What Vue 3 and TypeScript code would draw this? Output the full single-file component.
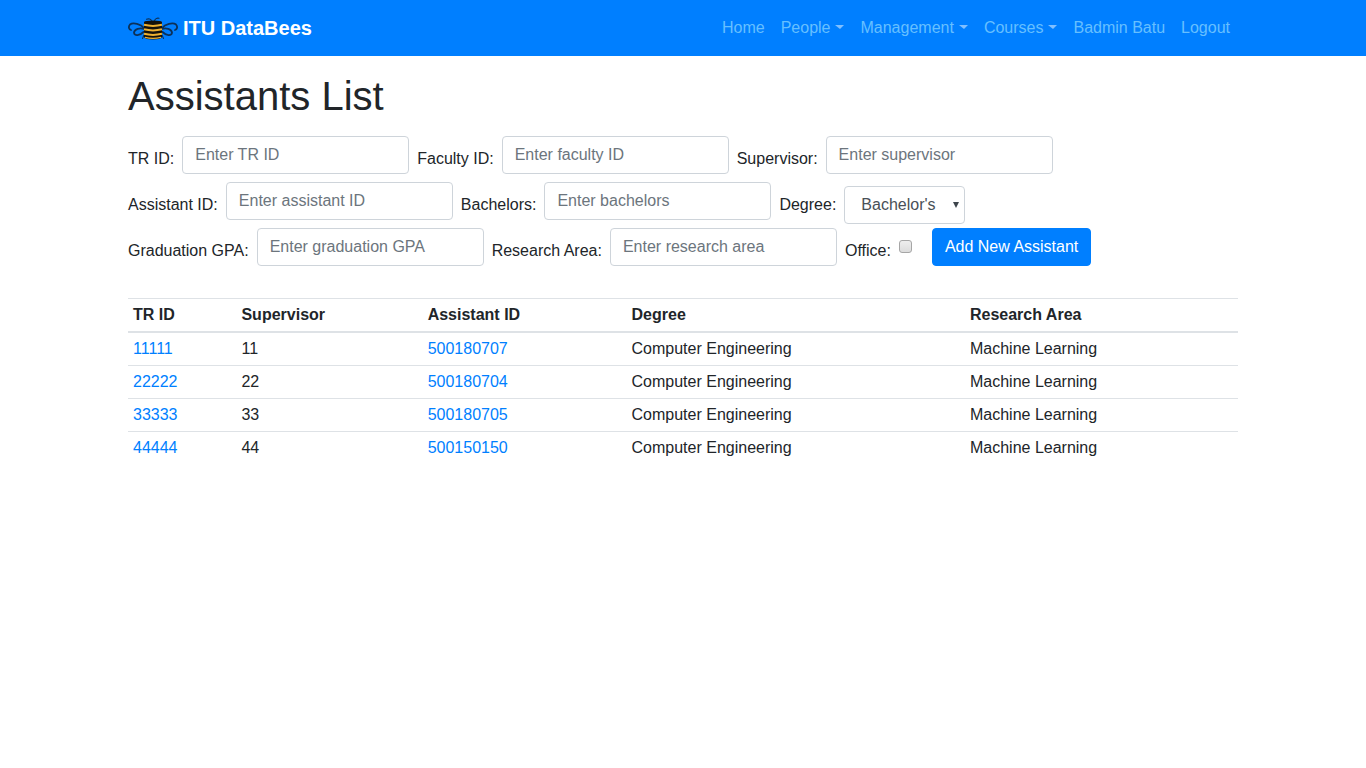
<script setup lang="ts">
import { reactive, ref } from 'vue'

interface NavItem { label: string; menu?: boolean }
interface TextField { id: string; label: string; hint: string }
interface Assistant { tr: string; supervisor: string; id: string; degree: string; area: string }

const nav: NavItem[] = [
  { label: 'Home' },
  { label: 'People', menu: true },
  { label: 'Management', menu: true },
  { label: 'Courses', menu: true },
  { label: 'Badmin Batu' },
  { label: 'Logout' },
]

const rows: TextField[][] = [
  [
    { id: 'tr', label: 'TR ID:', hint: 'Enter TR ID' },
    { id: 'faculty', label: 'Faculty ID:', hint: 'Enter faculty ID' },
    { id: 'supervisor', label: 'Supervisor:', hint: 'Enter supervisor' },
  ],
  [
    { id: 'assistant', label: 'Assistant ID:', hint: 'Enter assistant ID' },
    { id: 'bachelors', label: 'Bachelors:', hint: 'Enter bachelors' },
  ],
  [
    { id: 'gpa', label: 'Graduation GPA:', hint: 'Enter graduation GPA' },
    { id: 'area', label: 'Research Area:', hint: 'Enter research area' },
  ],
]

const values = reactive<Record<string, string>>({})
const degree = ref("Bachelor's")
const office = ref(false)

const headings = ['TR ID', 'Supervisor', 'Assistant ID', 'Degree', 'Research Area']
const field = 'Computer Engineering'
const area = 'Machine Learning'
const assistants: Assistant[] = [
  { tr: '11111', supervisor: '11', id: '500180707', degree: field, area },
  { tr: '22222', supervisor: '22', id: '500180704', degree: field, area },
  { tr: '33333', supervisor: '33', id: '500180705', degree: field, area },
  { tr: '44444', supervisor: '44', id: '500150150', degree: field, area },
]
</script>

<template>
  <header class="navbar">
    <div class="container bar">
      <a href="#" class="brand">
        <svg class="bee" viewBox="0 0 50 26" aria-hidden="true">
          <g fill="none" stroke="#0c3158" stroke-width="1.8" stroke-linecap="round">
            <path d="M16 13C13 9 5 7 2 9.500C0 12 1 14.500 3 15M16 14C12 12.500 6.500 14 6 17.500C6 21.500 12 20.500 15.500 17" />
            <path d="M34 13C37 9 45 7 48 9.500C50 12 49 14.500 47 15M34 14C38 12.500 43.500 14 44 17.500C44 21.500 38 20.500 34.500 17" />
            <path d="M23.500 6C23 3.800 20.500 3.500 18.500 4.200M26.500 6C27 3.800 29 2.800 31 3.300M16 20L14.500 23.500M34 20L35.500 23.500" stroke-width="1.1" />
          </g>
          <path d="M16 7Q17 5.500 25 5.500Q33 5.500 34 7V22Q33 24.500 25 24.500Q17 24.500 16 22Z" fill="#14120c" />
          <g fill="none" stroke="#edb132" stroke-width="2">
            <path d="M16 9.800Q25 12 34 9.800M16 14.300Q25 16.500 34 14.300M16 18.800Q25 21 34 18.800" />
            <path d="M17 22.400Q25 24.400 33 22.400" stroke-width="1.4" />
          </g>
        </svg>
        <span>ITU DataBees</span>
      </a>
      <nav class="links">
        <a v-for="item in nav" :key="item.label" href="#" :class="{ menu: item.menu }">{{ item.label }}</a>
      </nav>
    </div>
  </header>

  <main class="container">
    <h1>Assistants List</h1>

    <form @submit.prevent>
      <div v-for="(row, index) in rows" :key="index" class="row">
        <template v-for="item in row" :key="item.id">
          <label :for="item.id">{{ item.label }}</label>
          <input :id="item.id" v-model="values[item.id]" class="text" type="text" :placeholder="item.hint">
        </template>
        <template v-if="index === 1">
          <label for="degree">Degree:</label>
          <span class="select">
            <select id="degree" v-model="degree">
              <option>Bachelor's</option>
              <option>Master's</option>
            </select>
            <svg viewBox="0 0 6 6" aria-hidden="true"><path d="M0 0h6L3 6z" fill="#3d444b" /></svg>
          </span>
        </template>
        <template v-if="index === 2">
          <label for="office">Office:</label>
          <input id="office" v-model="office" class="check" type="checkbox">
          <button type="submit">Add New Assistant</button>
        </template>
      </div>
    </form>

    <table>
      <thead>
        <tr><th v-for="heading in headings" :key="heading" scope="col">{{ heading }}</th></tr>
      </thead>
      <tbody>
        <tr v-for="person in assistants" :key="person.id">
          <td><a href="#">{{ person.tr }}</a></td>
          <td>{{ person.supervisor }}</td>
          <td><a href="#">{{ person.id }}</a></td>
          <td>{{ person.degree }}</td>
          <td>{{ person.area }}</td>
        </tr>
      </tbody>
    </table>
  </main>
</template>

<style>
body {
  margin: 0;
  background: #fff;
  color: #212529;
  font: 16px/24px "Liberation Sans", Arial, sans-serif;
}
*, *::before, *::after { box-sizing: border-box; }
</style>

<style scoped>
a { color: #007fff; text-decoration: none; }
.container { max-width: 1140px; margin: 0 auto; padding: 0 15px; }
.navbar { background: #007fff; padding: 8px 0; }
.bar { display: flex; align-items: center; justify-content: space-between; }
.brand {
  display: flex;
  align-items: center;
  gap: 5px;
  color: #fff;
  font-size: 20px;
  font-weight: bold;
  line-height: 30px;
}
.bee { width: 50px; height: 26px; }
.links { display: flex; }
.links a { padding: 8px; color: #66bfff; }
.menu::after {
  content: "";
  display: inline-block;
  margin-left: 5px;
  vertical-align: 4px;
  border-top: 4px solid #80bfff;
  border-right: 4px solid transparent;
  border-left: 5px solid transparent;
}
h1 { margin: 16px 0; font-size: 40px; font-weight: 500; line-height: 48px; }
form { margin-bottom: 24px; }
.row { display: flex; flex-wrap: wrap; align-items: center; column-gap: 8px; }
.text, select {
  height: 38px;
  padding: 6px 12px;
  border: 1px solid #ced4da;
  border-radius: 4px;
  background: #fff;
  color: #495057;
  font: inherit;
}
.text { width: 227px; margin: 0 0 8px; }
.text::placeholder { color: #6c757d; opacity: 1; }
.select { position: relative; }
select { display: block; width: 121px; padding: 6px 16px; appearance: none; }
.select svg { position: absolute; top: 16px; right: 6px; width: 6px; height: 6px; pointer-events: none; }
.check {
  appearance: none;
  width: 13px;
  height: 13px;
  margin: 0 12px 9px 0;
  border: 1px solid #a6a6a6;
  border-radius: 3px;
  background: linear-gradient(#eee, #dcdcdc);
}
.check:checked { background: #007fff; }
button {
  height: 38px;
  margin: 0 0 8px;
  padding: 6px 12px;
  border: 1px solid #007fff;
  border-radius: 4px;
  background: #007fff;
  color: #fff;
  font: inherit;
  cursor: pointer;
}
table { width: 100%; border-collapse: collapse; }
th, td { padding: 4px 5px; border-top: 1px solid #dee2e6; text-align: left; vertical-align: top; }
thead th { border-bottom: 2px solid #dee2e6; vertical-align: bottom; }
</style>
